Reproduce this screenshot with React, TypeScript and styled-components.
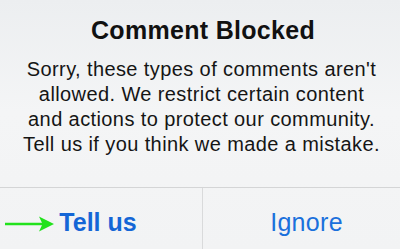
import React from "react";
import styled, { createGlobalStyle } from "styled-components";

const Global = createGlobalStyle`
  html, body { margin: 0; padding: 0; }
  body { background: #f1f2f3; }
`;

const Alert = styled.div`
  width: 400px;
  height: 249px;
  display: flex;
  flex-direction: column;
  background: linear-gradient(180deg, #eceef0 0%, #f4f5f6 45%, #f2f3f4 100%);
  font-family: "Liberation Sans", Arial, sans-serif;
  overflow: hidden;
`;

const Body = styled.div`
  height: 187px;
  display: flex;
  flex-direction: column;
  align-items: center;
  padding-top: 15px;
  box-sizing: border-box;
`;

const Title = styled.h1`
  margin: 0;
  font-size: 25px;
  line-height: 30px;
  font-weight: 700;
  letter-spacing: 0.3px;
  color: #111;
  padding-left: 6px;
`;

const Message = styled.p`
  margin: 12px 0 0;
  font-size: 20px;
  line-height: 25px;
  letter-spacing: 0.4px;
  color: #151515;
  text-align: center;
  padding-left: 3px;
`;

const Actions = styled.div`
  flex: 1;
  display: grid;
  grid-template-columns: 203px 1fr;
  border-top: 1.5px solid #d4d5d6;
`;

const ActionButton = styled.button<{ $primary?: boolean; $divider?: boolean }>`
  position: relative;
  border: 0;
  background: transparent;
  margin: 0;
  padding: 8px 0 0;
  font-family: inherit;
  font-size: 25px;
  font-weight: ${(p) => (p.$primary ? 700 : 400)};
  letter-spacing: ${(p) => (p.$primary ? "0" : "0.3px")};
  color: ${(p) => (p.$primary ? "#1466d6" : "#1a70dc")};
  border-right: ${(p) => (p.$divider ? "1.5px solid #d9dadb" : "0")};
  display: flex;
  align-items: center;
  justify-content: center;
  cursor: pointer;
`;

const Label = styled.span<{ $shift?: number }>`
  transform: translateX(${(p) => p.$shift ?? 0}px);
`;

const Pointer = styled.svg`
  position: absolute;
  left: 4px;
  top: 27px;
`;

export default function App() {
  return (
    <>
      <Global />
      <Alert>
        <Body>
          <Title>Comment Blocked</Title>
          <Message>
            Sorry, these types of comments aren't
            <br />
            allowed. We restrict certain content
            <br />
            and actions to protect our community.
            <br />
            Tell us if you think we made a mistake.
          </Message>
        </Body>
        <Actions>
          <ActionButton $primary $divider>
            <Pointer width="52" height="18" viewBox="0 0 52 18">
              <line x1="1" y1="9" x2="42" y2="9" stroke="#22e21c" strokeWidth="2.4" />
              <path d="M35 1.5 L50 9 L35 16.5 L38.5 9 Z" fill="#22e21c" />
            </Pointer>
            <Label $shift={-3}>Tell us</Label>
          </ActionButton>
          <ActionButton>
            <Label $shift={5}>Ignore</Label>
          </ActionButton>
        </Actions>
      </Alert>
    </>
  );
}
